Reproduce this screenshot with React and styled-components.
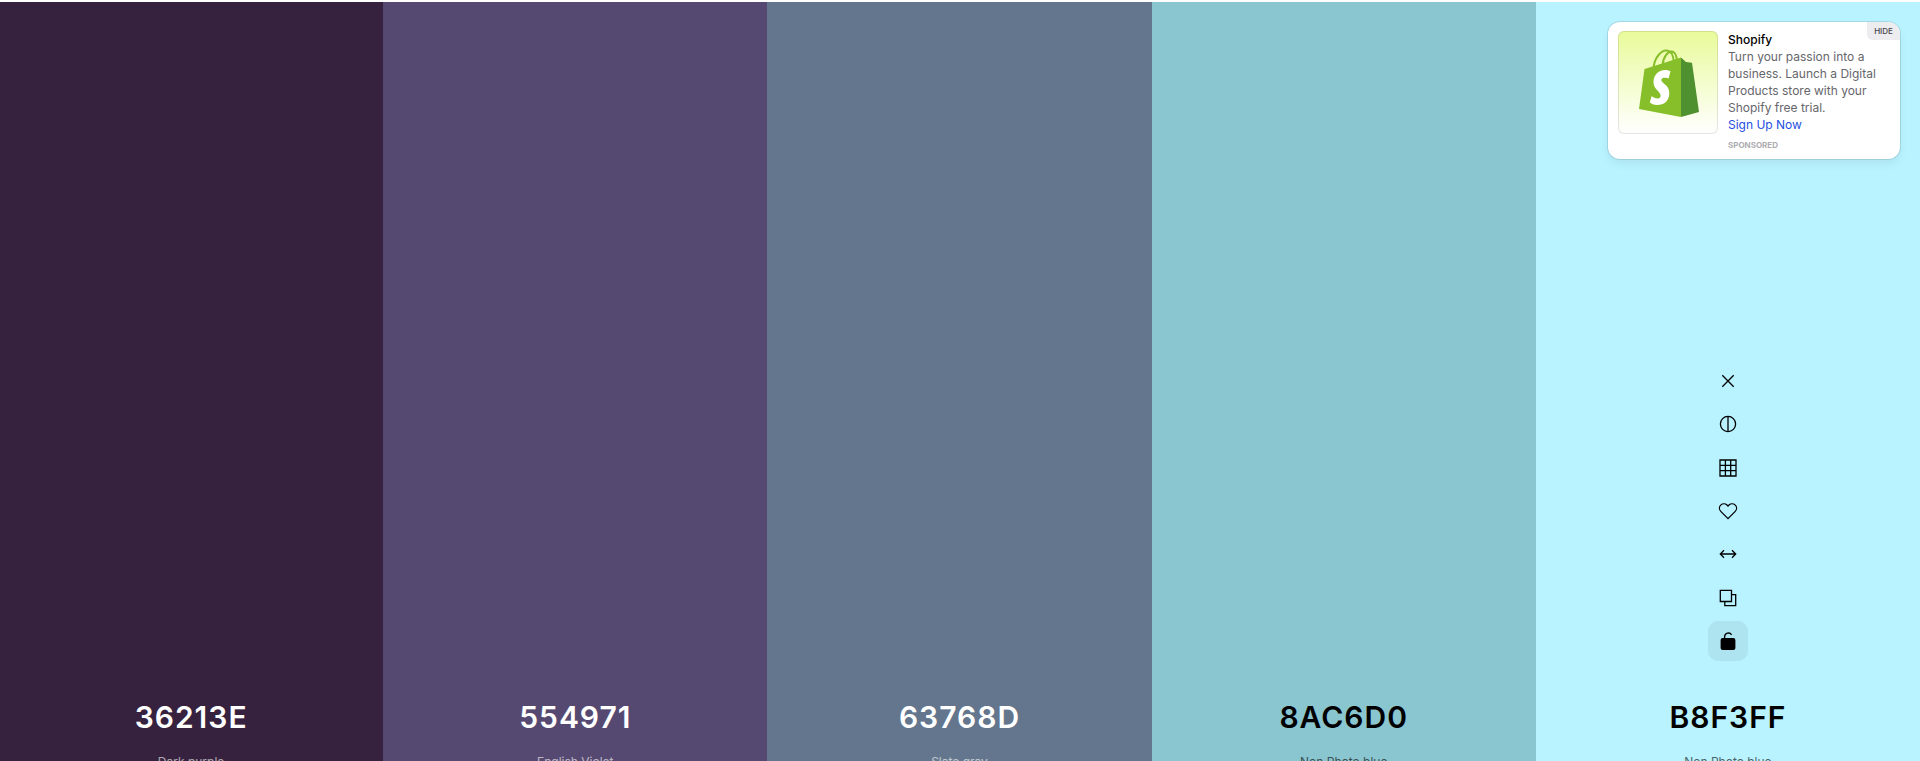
import React from 'react';
import styled, { createGlobalStyle } from 'styled-components';

const GlobalStyle = createGlobalStyle`
  * { box-sizing: border-box; }
  html { overflow: hidden; }
  body {
    margin: 0;
    background: #fff;
    font-family: Inter, 'Liberation Sans', sans-serif;
  }
  button { font: inherit; color: inherit; border: 0; padding: 0; cursor: pointer; }
`;

const Page = styled.main`
  height: 100vh;
  padding-top: 2px;
  overflow: hidden;
`;

const Palette = styled.div`
  display: flex;
  height: calc(100% + 48px);
  margin-left: -1px;
`;

const Column = styled.section`
  flex: 1 1 0;
  display: flex;
  flex-direction: column;
  align-items: center;
  justify-content: flex-end;
  padding-bottom: 37px;
  background: ${(p) => p.$color};
  color: ${(p) => (p.$dark ? '#fff' : '#000')};
`;

const Tools = styled.div`
  display: flex;
  flex-direction: column;
  justify-content: space-between;
  height: 300px;
  margin-bottom: 32px;
`;

const ToolButton = styled.button`
  display: flex;
  align-items: center;
  justify-content: center;
  width: 40px;
  height: 40px;
  border-radius: 10px;
  background: ${(p) => (p.$active ? 'rgba(0, 0, 0, 0.06)' : 'transparent')};
`;

const Hex = styled.button`
  background: none;
  font-size: 30px;
  font-weight: 600;
  line-height: 48px;
  letter-spacing: 1px;
`;

const Name = styled.button`
  margin-top: 11px;
  background: none;
  font-size: 12px;
  line-height: 20px;
  opacity: 0.6;
`;

const Ad = styled.aside`
  position: absolute;
  top: 22px;
  right: 20px;
  display: flex;
  gap: 10px;
  width: 292px;
  padding: 9px 10px 8px;
  border-radius: 12px;
  background: #fff;
  box-shadow: 0 0 0 1px rgba(0, 0, 0, 0.1), 0 5px 10px rgba(0, 0, 0, 0.06);
  overflow: hidden;
`;

const AdImage = styled.div`
  flex: none;
  display: flex;
  align-items: center;
  justify-content: center;
  width: 100px;
  height: 103px;
  padding-left: 2px;
  border: 1px solid rgba(0, 0, 0, 0.1);
  border-radius: 6px;
  background: linear-gradient(#e8fb9a, #fff) border-box;
`;

const AdText = styled.div`
  font-size: 12px;
  line-height: 17px;
  color: #66666b;
`;

const AdTitle = styled.div`
  font-weight: 500;
  color: #000;
`;

const AdLink = styled.a`
  display: block;
  color: #1f4fe0;
  text-decoration: none;
`;

const Sponsored = styled.div`
  margin-top: 6px;
  font-size: 8px;
  line-height: 12px;
  font-weight: 700;
  color: #adadb1;
`;

const Hide = styled.button`
  && {
    position: absolute;
    top: 0;
    right: 0;
    width: 33px;
    height: 18px;
    border-radius: 0 0 0 6px;
    background: #ededf0;
    color: #44444a;
    font-size: 8px;
    font-weight: 500;
  }
`;

const Icon = ({ children }) => (
  <svg width="20" height="20" viewBox="0 0 20 20" fill="none" stroke="currentColor" strokeWidth="1.3" aria-hidden="true">
    {children}
  </svg>
);

const tools = [
  ['Remove color', <path d="M4.3 4.3l11.4 11.4M15.7 4.3L4.3 15.7" />],
  ['Check contrast', <><circle cx="10" cy="10" r="7.6" /><path d="M10 2.4v15.2" /></>],
  ['View shades', <path d="M2 2h16v16H2zM2 7.4h16M2 12.7h16M7.4 2v16M12.7 2v16" />],
  ['Save color', <path d="M10 17.6L3 10.6C1 8.6 1 5.8 2.7 4.1C4.6 2.3 7.4 2.5 9 4L10 5l1-1c1.600-1.500 4.400-1.700 6.300.1C19 5.800 19 8.600 17 10.600z" />],
  ['Drag color', <path d="M2.500 10h15M6 6.200L2.300 10L6 13.800M14 6.200L17.700 10L14 13.800" />],
  ['Copy hex', <path d="M2.300 2.300h11.200v11.200H2.300zM13.500 6.700h4.200v11H6.800v-4.200" />],
];

const LockIcon = () => (
  <svg width="20" height="20" viewBox="0 0 20 20" aria-hidden="true">
    <rect x="2.600" y="7" width="14.800" height="12" rx="2" fill="currentColor" />
    <path d="M6.600 8V5.600A3.800 3.800 0 0 1 13.600 3.800" fill="none" stroke="currentColor" strokeWidth="1.300" />
  </svg>
);

const BagLogo = () => (
  <svg width="60" height="68" viewBox="0 0 60 68" aria-hidden="true">
    <path d="M14.500 20C15 8 23 .8 28 1.600C33 2 34.500 7 35 14M23.500 17C24 8 29 2 33 2.600C36 3 37.500 6 38 12" fill="none" stroke="#86bf2a" strokeWidth="2" />
    <path d="M5.500 20L42 8.500V68L0 60z" fill="#86bf2a" />
    <path d="M42 8.500l5 4.500 6 .8L60 63l-18 5z" fill="#4f9030" />
    <path d="M31.500 22.300L29.600 29.500C27.300 28.400 22.500 28 22.300 31C22.300 34.500 30.300 35.500 30.300 44C30.300 52.500 24.500 56 18.500 56C14.500 56 12 54.500 10.800 53.200L12.700 47C14 48.200 16.500 49.500 18.700 49.500C20.600 49.500 21.600 48.300 21.600 46.800C21.600 42 14.500 41 14.500 33C14.500 26 19.500 21 26 21C28.500 21 30.300 21.600 31.500 22.300z" fill="#fff" />
  </svg>
);

const colors = [
  { hex: '36213E', name: 'Dark purple', dark: true },
  { hex: '554971', name: 'English Violet', dark: true },
  { hex: '63768D', name: 'Slate gray', dark: true },
  { hex: '8AC6D0', name: 'Non Photo blue' },
  { hex: 'B8F3FF', name: 'Non Photo blue', active: true },
];

export default function App() {
  return (
    <Page>
      <GlobalStyle />
      <Palette>
        {colors.map((c) => (
          <Column key={c.hex} $color={`#${c.hex}`} $dark={c.dark}>
            {c.active && (
              <Tools>
                {tools.map(([label, drawing]) => (
                  <ToolButton key={label} aria-label={label}><Icon>{drawing}</Icon></ToolButton>
                ))}
                <ToolButton $active aria-label="Toggle lock"><LockIcon /></ToolButton>
              </Tools>
            )}
            <Hex>{c.hex}</Hex>
            <Name>{c.name}</Name>
          </Column>
        ))}
      </Palette>
      <Ad>
        <AdImage><BagLogo /></AdImage>
        <AdText>
          <AdTitle>Shopify</AdTitle>
          Turn your passion into a business. Launch a Digital Products store with your Shopify free trial.
          <AdLink href="#signup">Sign Up Now</AdLink>
          <Sponsored>SPONSORED</Sponsored>
        </AdText>
        <Hide>HIDE</Hide>
      </Ad>
    </Page>
  );
}
